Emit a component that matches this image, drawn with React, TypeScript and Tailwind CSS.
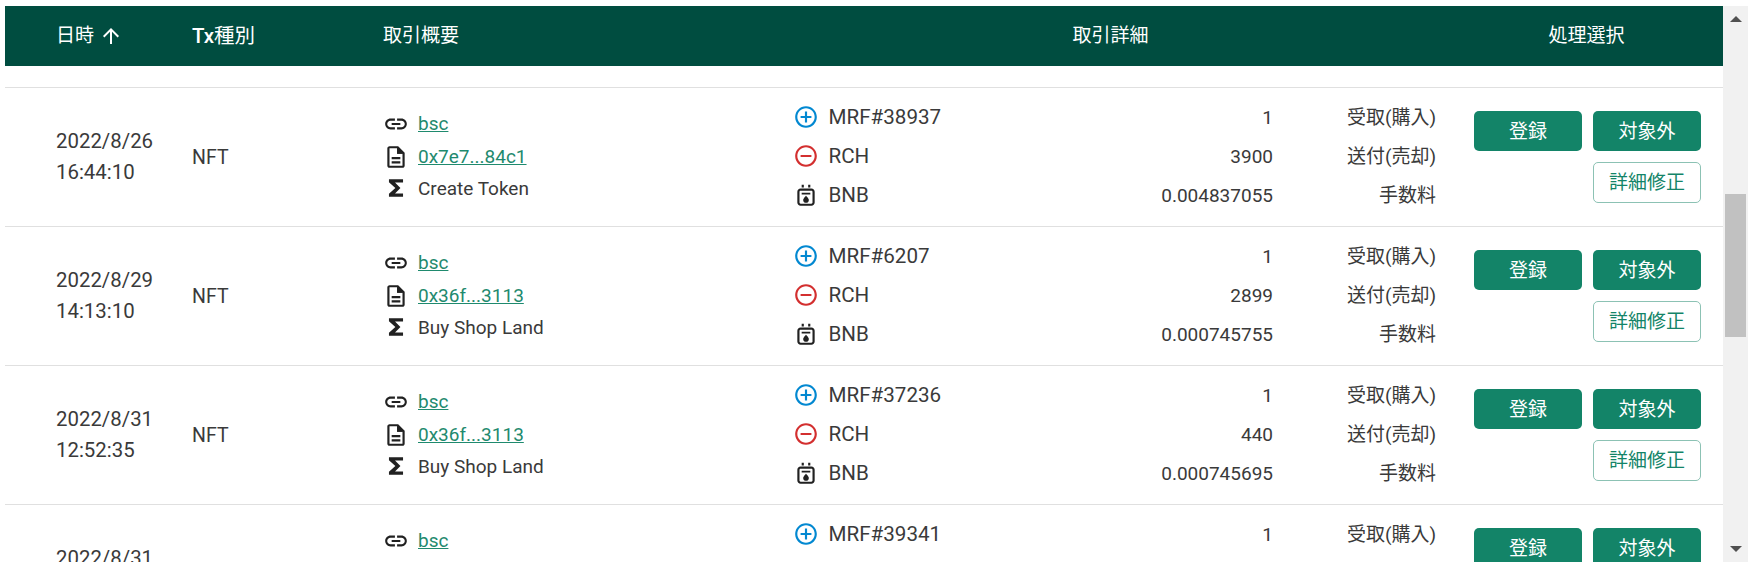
const FONT = "font-['Roboto','Noto_Sans_CJK_JP',sans-serif]";

const rows = [
  { d: '2022/8/26', t: '16:44:10', hash: '0x7e7...84c1', m: 'Create Token', a: 'MRF#38937', r: '3900', f: '0.004837055' },
  { d: '2022/8/29', t: '14:13:10', hash: '0x36f...3113', m: 'Buy Shop Land', a: 'MRF#6207', r: '2899', f: '0.000745755' },
  { d: '2022/8/31', t: '12:52:35', hash: '0x36f...3113', m: 'Buy Shop Land', a: 'MRF#37236', r: '440', f: '0.000745695' },
  { d: '2022/8/31', t: '15:20:05', hash: '0x36f...3113', m: 'Buy Shop Land', a: 'MRF#39341', r: '440', f: '0.000745695' },
];

function LinkIcon() {
  return (
    <svg width="26" height="26" viewBox="0 0 24 24" fill="#212121" className="shrink-0">
      <path d="M3.9 12c0-1.71 1.39-3.1 3.1-3.1h4V7H7c-2.76 0-5 2.24-5 5s2.24 5 5 5h4v-1.9H7c-1.71 0-3.1-1.39-3.1-3.1zM8 13h8v-2H8v2zm9-6h-4v1.9h4c1.71 0 3.1 1.39 3.1 3.1s-1.39 3.1-3.1 3.1h-4V17h4c2.76 0 5-2.24 5-5s-2.24-5-5-5z" />
    </svg>
  );
}
function DocIcon() {
  return (
    <svg width="26" height="26" viewBox="0 0 24 24" fill="#212121" className="shrink-0">
      <path d="M8 16h8v2H8zm0-4h8v2H8zm6-10H6c-1.1 0-2 .9-2 2v16c0 1.1.89 2 1.99 2H18c1.1 0 2-.9 2-2V8l-6-6zm4 18H6V4h7v5h5v11z" />
      <path d="M13 3.5V9h5.5z" />
    </svg>
  );
}
function SigmaIcon() {
  return (
    <svg width="26" height="26" viewBox="0 0 24 24" fill="#212121" className="shrink-0">
      <path d="M18.5 4h-13v2.6L11.4 12l-5.9 5.4V20h13v-3h-7.4l5-5-5-5h7.4z" />
    </svg>
  );
}
function PlusIcon() {
  return (
    <svg width="26" height="26" viewBox="0 0 24 24" fill="#0288d1" className="shrink-0">
      <path d="M13 7h-2v4H7v2h4v4h2v-4h4v-2h-4V7zm-1-5C6.48 2 2 6.48 2 12s4.48 10 10 10 10-4.48 10-10S17.52 2 12 2zm0 18c-4.41 0-8-3.59-8-8s3.59-8 8-8 8 3.59 8 8-3.59 8-8 8z" />
    </svg>
  );
}
function MinusIcon() {
  return (
    <svg width="26" height="26" viewBox="0 0 24 24" fill="#d32f2f" className="shrink-0">
      <path d="M7 11v2h10v-2H7zm5-9C6.48 2 2 6.48 2 12s4.48 10 10 10 10-4.48 10-10S17.52 2 12 2zm0 18c-4.41 0-8-3.59-8-8s3.59-8 8-8 8 3.59 8 8-3.59 8-8 8z" />
    </svg>
  );
}
function FeeIcon() {
  return (
    <svg width="26" height="26" viewBox="0 0 24 24" fill="#212121" className="shrink-0">
      <path d="M17 6H7C5.34 6 4 7.34 4 9v10c0 1.66 1.34 3 3 3h10c1.66 0 3-1.34 3-3V9c0-1.66-1.34-3-3-3zm1 13c0 .55-.45 1-1 1H7c-.55 0-1-.45-1-1V9c0-.55.45-1 1-1h10c.55 0 1 .45 1 1v10z" />
      <path d="M8 2.5h2V5H8zM14 2.5h2V5h-2zM8 10h8v1.6H8z" />
      <path d="M12 12.6s-2.6 2.4-2.6 3.9a2.6 2.6 0 0 0 5.2 0c0-1.5-2.6-3.9-2.6-3.9z" />
    </svg>
  );
}

function Row({ row }: { row: (typeof rows)[number] }) {
  return (
    <div className="flex h-[139px] shrink-0 border-b border-[#e0e0e0] text-[#3a3a3a] leading-[31px]">
      <div className="w-[187px] shrink-0 pl-[51px] self-center text-[20.4px]">
        <div>{row.d}</div>
        <div>{row.t}</div>
      </div>
      <div className="w-[191px] shrink-0 self-center text-[19.5px]">NFT</div>
      <div className="w-[410px] shrink-0 flex flex-col justify-center text-[19px] pb-[2px]">
        <div className="flex items-center gap-[9px] h-[24px]">
          <LinkIcon />
          <a className="text-[#1f8a6e] underline">bsc</a>
        </div>
        <div className="flex items-center gap-[9px] h-[24px] mt-[9px]">
          <DocIcon />
          <a className="text-[#1f8a6e] underline">{row.hash}</a>
        </div>
        <div className="flex items-center gap-[9px] h-[24px] mt-[7.5px]">
          <SigmaIcon />
          <span>{row.m}</span>
        </div>
      </div>
      <div className="w-[657px] shrink-0 flex flex-col justify-center gap-[15px] pb-[2px]">
        <Line icon={<PlusIcon />} name={row.a} amount="1" kind="受取(購入)" />
        <Line icon={<MinusIcon />} name="RCH" amount={row.r} kind="送付(売却)" />
        <Line icon={<FeeIcon />} name="BNB" amount={row.f} kind="手数料" />
      </div>
      <div className="flex-1 pl-[24px] pt-[23px]">
        <div className="flex gap-[11px]">
          <button className="w-[108px] h-[40px] rounded-[5px] bg-[#138468] text-white text-[19px]">登録</button>
          <button className="w-[108px] h-[40px] rounded-[5px] bg-[#138468] text-white text-[19px]">対象外</button>
        </div>
        <div className="flex justify-end w-[227px] mt-[11px]">
          <button className="w-[108px] h-[41px] rounded-[5px] border border-[#8cc2b4] text-[#138468] text-[19px]">詳細修正</button>
        </div>
      </div>
    </div>
  );
}

function Line({ icon, name, amount, kind }: { icon: React.ReactNode; name: string; amount: string; kind: string }) {
  return (
    <div className="flex items-center h-[24px] text-[19px]">
      {icon}
      <span className="ml-[9.5px] w-[120.5px] text-[20.6px]">{name}</span>
      <span className="w-[324px] text-right">{amount}</span>
      <span className="w-[163px] text-right">{kind}</span>
    </div>
  );
}

export default function App() {
  return (
    <div className={`${FONT} flex h-[567px] w-[1751px] overflow-hidden bg-white pl-[5px] pt-[6px] pb-[5px]`}>
      <div className="w-[1718px] shrink-0 flex flex-col overflow-hidden">
        <div className="flex h-[60px] shrink-0 items-center bg-[#004d40] text-white text-[19px]">
          <div className="w-[187px] shrink-0 pl-[51px] flex items-center gap-[5px]">
            <span>日時</span>
            <svg width="24" height="24" viewBox="0 0 24 24" fill="#ffffff"><path d="M4 12l1.41 1.41L11 7.83V20h2V7.83l5.58 5.59L20 12l-8-8-8 8z" /></svg>
          </div>
          <div className="w-[191px] shrink-0 text-[20.5px]"><span className="font-medium">Tx</span>種別</div>
          <div className="w-[410px] shrink-0">取引概要</div>
          <div className="w-[657px] shrink-0 text-center pr-[22px]">取引詳細</div>
          <div className="flex-1 text-center">処理選択</div>
        </div>
        <div className="h-[22px] shrink-0 border-b border-[#e0e0e0]" />
        {rows.map((row, i) => (
          <Row key={i} row={row} />
        ))}
      </div>
      <div className="w-[25px] shrink-0 bg-[#f1f1f1] flex flex-col items-center">
        <div className="h-[26px] shrink-0 flex items-center justify-center">
          <div className="w-0 h-0 border-x-[6px] border-x-transparent border-b-[6px] border-b-[#505050]" />
        </div>
        <div className="h-[162px] shrink-0" />
        <div className="w-[21px] h-[143px] shrink-0 bg-[#c1c1c1]" />
        <div className="flex-1" />
        <div className="h-[27px] shrink-0 flex items-center justify-center">
          <div className="w-0 h-0 border-x-[6px] border-x-transparent border-t-[6px] border-t-[#505050]" />
        </div>
      </div>
    </div>
  );
}
